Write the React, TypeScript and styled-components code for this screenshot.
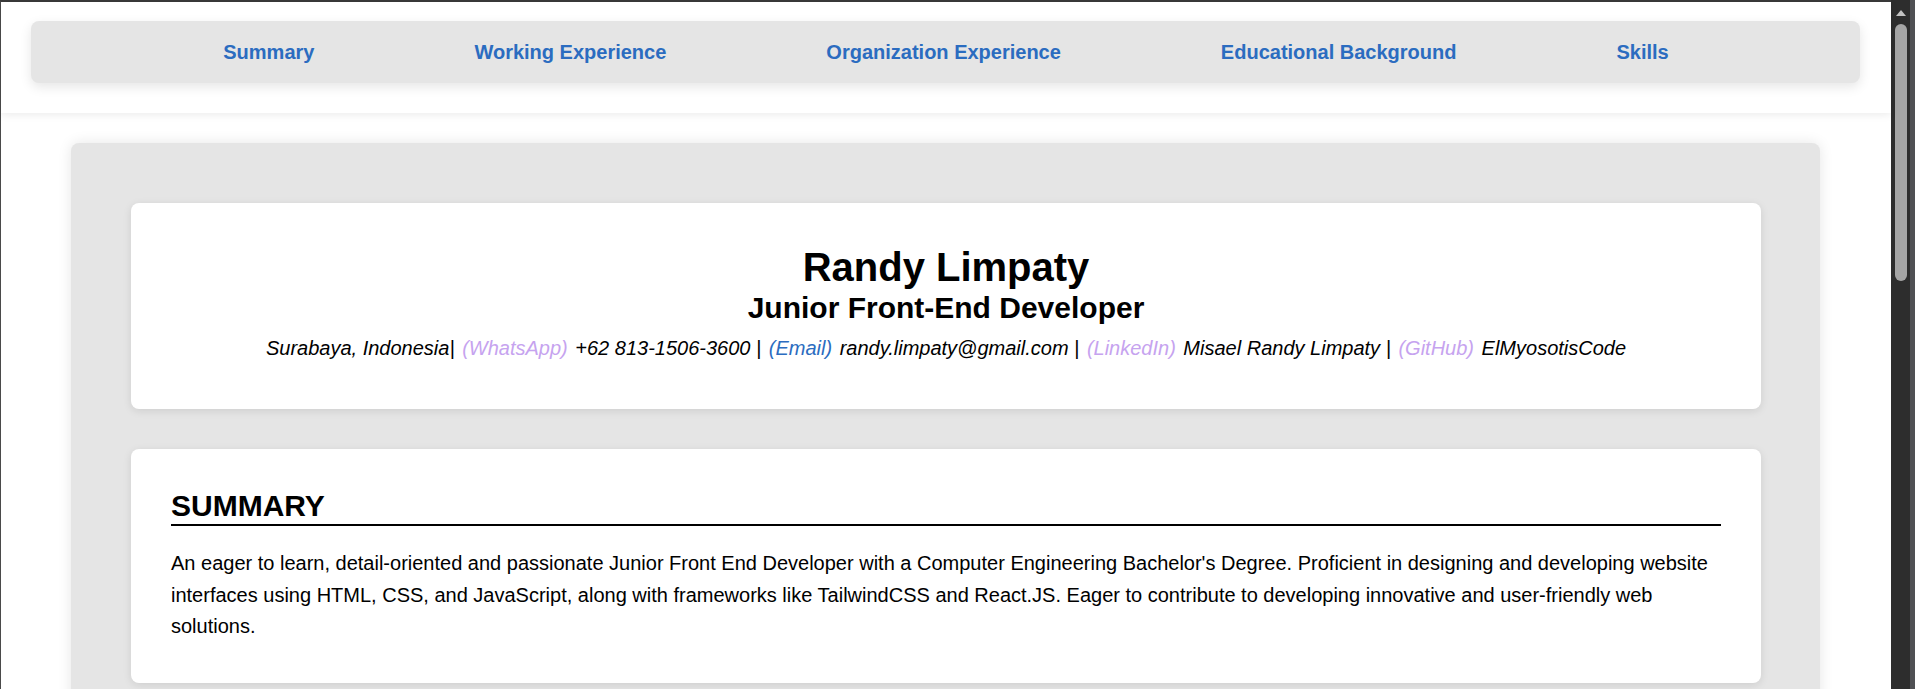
import React from "react";
import styled, { createGlobalStyle } from "styled-components";

const Global = createGlobalStyle`
  body {
    margin: 0;
    background: #ffffff;
    font-family: "Liberation Sans", Arial, sans-serif;
    color: #000;
  }
  * { box-sizing: border-box; }
`;

const Frame = styled.div`
  display: flex;
  align-items: flex-start;
  width: 100%;
`;

const Page = styled.div`
  flex: 1;
  min-width: 0;
  border-top: 2px solid #3a3a3a;
  border-left: 1px solid #4a4a4a;
  background: #ffffff;
`;

const ScrollRail = styled.aside`
  position: sticky;
  top: 0;
  flex-shrink: 0;
  width: 24px;
  height: 100vh;
  background: #2d2d2d;
  border-right: 5px solid #4f5054;
  display: flex;
  flex-direction: column;
  align-items: flex-start;
  padding: 10px 0 0 4px;
`;

const ScrollArrow = styled.div`
  width: 0;
  height: 0;
  margin-left: 1px;
  border-left: 5px solid transparent;
  border-right: 5px solid transparent;
  border-bottom: 6px solid #c2c2c2;
`;

const ScrollThumb = styled.div`
  margin-top: 8px;
  width: 12px;
  height: 257px;
  border-radius: 6px;
  background: #a5a5a5;
`;

const Header = styled.header`
  background: #ffffff;
  padding: 19px 31px 30px 30px;
  box-shadow: 0 2px 8px rgba(0, 0, 0, 0.08);
  position: relative;
  z-index: 1;
`;

const Nav = styled.nav`
  height: 62px;
  background: #e5e5e5;
  border-radius: 8px;
  box-shadow: 0 4px 12px rgba(0, 0, 0, 0.1);
  display: flex;
  align-items: center;
  justify-content: center;
  gap: 160px;
  padding-left: 1px;
`;

const NavLink = styled.a`
  color: #2b6cc0;
  font-weight: 700;
  font-size: 20px;
  text-decoration: none;
`;

const Main = styled.main`
  margin: 30px 71px 40px 70px;
  background: #e5e5e5;
  border-radius: 8px;
  box-shadow: 0 0 14px rgba(0, 0, 0, 0.1);
  padding: 60px 59px 60px 60px;
  display: flex;
  flex-direction: column;
  gap: 40px;
`;

const Card = styled.section<{ $center?: boolean }>`
  background: #ffffff;
  border-radius: 8px;
  box-shadow: 0 2px 8px rgba(0, 0, 0, 0.1);
  padding: 40px;
  text-align: ${(p) => (p.$center ? "center" : "left")};
`;

const Name = styled.h1`
  margin: 0;
  font-size: 40px;
  font-weight: 700;
  line-height: 48px;
`;

const Role = styled.h2`
  margin: 0;
  font-size: 30px;
  font-weight: 700;
  line-height: 34px;
`;

const Contact = styled.p`
  margin: 7px 0 5px;
  font-size: 20px;
  font-style: italic;
  line-height: 32px;
`;

const Tag = styled.span<{ $tone: "purple" | "blue" }>`
  margin: 0 2px;
  color: ${(p) => (p.$tone === "blue" ? "#2b6cc0" : "#c6a3ef")};
`;

const SectionTitle = styled.h2`
  margin: 0;
  font-size: 30px;
  font-weight: 700;
  line-height: 34px;
  padding-bottom: 1px;
  border-bottom: 2px solid #000;
`;

const Body = styled.p`
  margin: 22px 0 0;
  font-size: 20px;
  line-height: 31.5px;
`;

export default function App() {
  const links = [
    "Summary",
    "Working Experience",
    "Organization Experience",
    "Educational Background",
    "Skills",
  ];
  return (
    <>
      <Global />
      <Frame>
        <Page>
          <Header>
            <Nav>
              {links.map((l) => (
                <NavLink key={l} href={`#${l.toLowerCase().replace(/ /g, "-")}`}>
                  {l}
                </NavLink>
              ))}
            </Nav>
          </Header>
          <Main>
            <Card $center>
              <Name>Randy Limpaty</Name>
              <Role>Junior Front-End Developer</Role>
              <Contact>
                Surabaya, Indonesia| <Tag $tone="purple">(WhatsApp)</Tag> +62 813-1506-3600 |{" "}
                <Tag $tone="blue">(Email)</Tag> randy.limpaty@gmail.com |{" "}
                <Tag $tone="purple">(LinkedIn)</Tag> Misael Randy Limpaty |{" "}
                <Tag $tone="purple">(GitHub)</Tag> ElMyosotisCode
              </Contact>
            </Card>
            <Card id="summary">
              <SectionTitle>SUMMARY</SectionTitle>
              <Body>
                An eager to learn, detail-oriented and passionate Junior Front End Developer with a
                Computer Engineering Bachelor's Degree. Proficient in designing and developing
                website interfaces using HTML, CSS, and JavaScript, along with frameworks like
                TailwindCSS and React.JS. Eager to contribute to developing innovative and
                user-friendly web solutions.
              </Body>
            </Card>
          </Main>
        </Page>
        <ScrollRail aria-hidden="true">
          <ScrollArrow />
          <ScrollThumb />
        </ScrollRail>
      </Frame>
    </>
  );
}
